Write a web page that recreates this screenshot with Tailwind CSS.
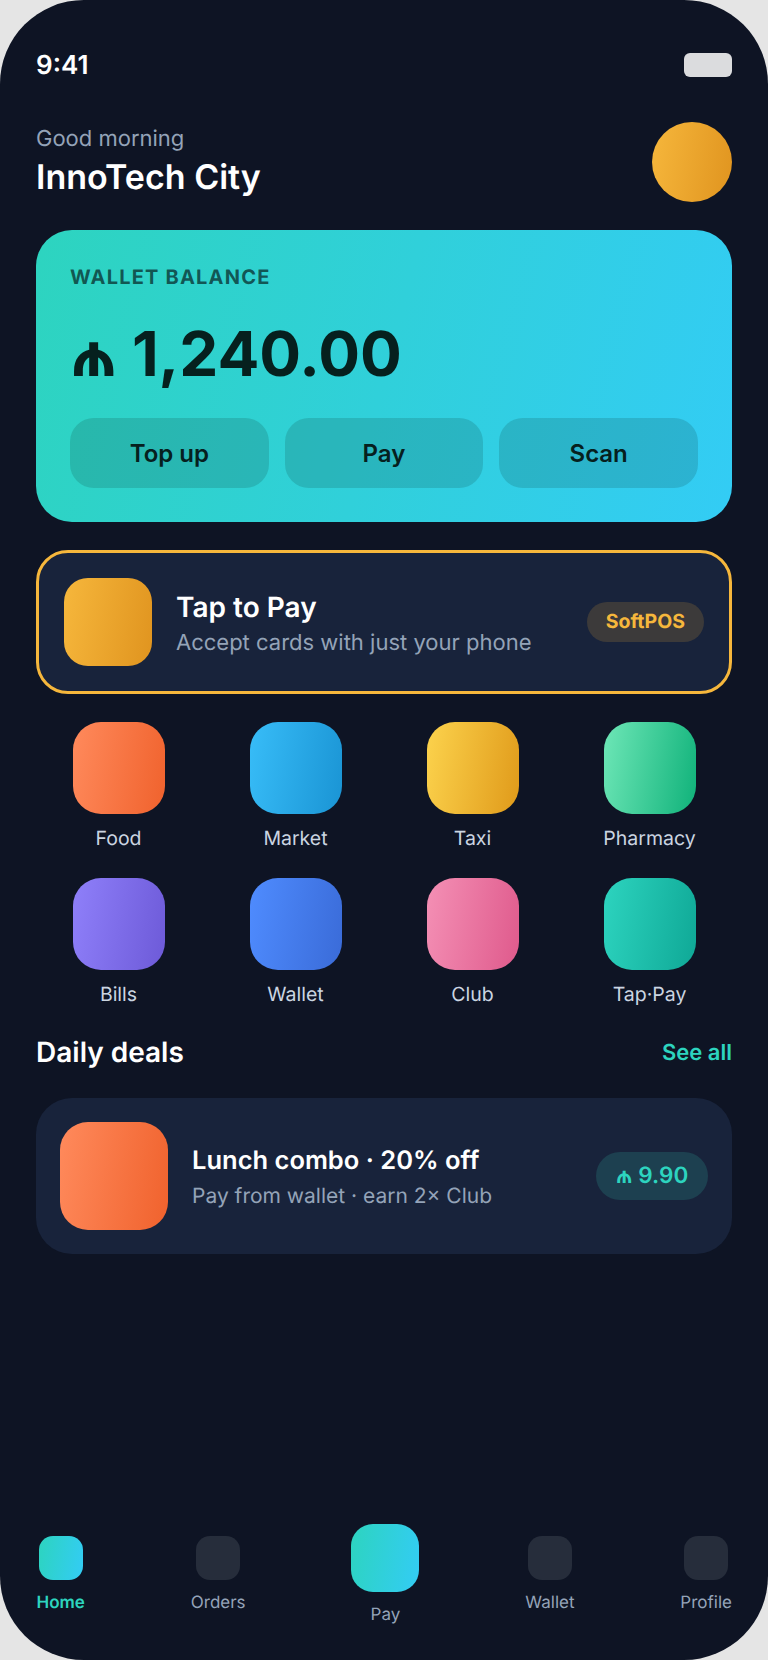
<!DOCTYPE html>
<html lang="en">
<head>
  <meta charset="UTF-8" />
  <meta name="viewport" content="width=device-width, initial-scale=1.0"/>
  <title>InnoTech City</title>
  <script src="https://cdn.jsdelivr.net/npm/@tailwindcss/browser@4"></script>
</head>
<body class="bg-[#e5e5e5] font-['Inter',sans-serif] [text-rendering:geometricPrecision]">
  <div class="w-[768px] h-[1660px] bg-[#0e1424] rounded-[84px] overflow-hidden flex flex-col text-white">

    <!-- status bar -->
    <div class="flex justify-between items-center px-9 pt-[51px] h-[79px]">
      <span class="text-[26px] leading-[30px] font-semibold pt-px">9:41</span>
      <div class="w-12 h-6 rounded-md bg-white/85"></div>
    </div>

    <!-- greeting -->
    <div class="flex justify-between items-center px-9 mt-[43px] h-[80px]">
      <div class="pt-0.5">
        <p class="text-[22px] leading-[26px] text-[#94a3b8]">Good morning</p>
        <h1 class="text-[34px] leading-[44px] font-semibold mt-1">InnoTech City</h1>
      </div>
      <div class="w-20 h-20 rounded-full bg-[linear-gradient(100deg,#f6b73c,#e0941f)]"></div>
    </div>

    <!-- balance card -->
    <div class="mx-9 mt-7 h-[292px] rounded-[36px] px-[34px] pt-[35px] bg-[linear-gradient(105deg,#2dd4bf,#33ccf5)] text-[#06201e]">
      <p class="text-[20px] leading-6 font-bold tracking-[1.2px] text-[#06201e]/70">WALLET BALANCE</p>
      <p class="text-[62px] leading-[80px] font-bold mt-[25px]">₼ 1,240.00</p>
      <div class="grid grid-cols-3 gap-4 mt-6">
        <button class="h-[70px] pt-0.5 rounded-3xl bg-[#06201e]/15 text-[24px] font-semibold">Top up</button>
        <button class="h-[70px] pt-0.5 rounded-3xl bg-[#06201e]/15 text-[24px] font-semibold">Pay</button>
        <button class="h-[70px] pt-0.5 rounded-3xl bg-[#06201e]/15 text-[24px] font-semibold">Scan</button>
      </div>
    </div>

    <!-- tap to pay -->
    <div class="mx-9 mt-7 h-[144px] rounded-[32px] border-[3px] border-[#f6b73c] bg-[#18233b] flex items-center pl-[25px] pr-[25px]">
      <div class="w-[88px] h-[88px] rounded-3xl bg-[linear-gradient(100deg,#f6b73c,#e0941f)]"></div>
      <div class="ml-6 flex-1 pt-0.5">
        <p class="text-[28px] leading-[34px] font-semibold">Tap to Pay</p>
        <p class="text-[22px] leading-[28px] text-[#94a3b8] mt-[5px]">Accept cards with just your phone</p>
      </div>
      <span class="px-[19px] h-10 flex items-center rounded-full bg-[#3c3a3a] text-[#f6b73c] text-[19.5px] font-bold">SoftPOS</span>
    </div>

    <!-- services -->
    <div class="mx-9 mt-7 grid grid-cols-4 gap-x-3 gap-y-[28px]">
      <div class="flex flex-col items-center">
        <div class="w-[92px] h-[92px] rounded-[28px] bg-[linear-gradient(100deg,#ff8a5c,#f0622d)]"></div>
        <span class="mt-3 text-[19.5px] leading-6 text-[#cbd5e1]">Food</span>
      </div>
      <div class="flex flex-col items-center">
        <div class="w-[92px] h-[92px] rounded-[28px] bg-[linear-gradient(100deg,#38bdf8,#1a94d4)]"></div>
        <span class="mt-3 text-[19.5px] leading-6 text-[#cbd5e1]">Market</span>
      </div>
      <div class="flex flex-col items-center">
        <div class="w-[92px] h-[92px] rounded-[28px] bg-[linear-gradient(100deg,#fcd34d,#e09a1a)]"></div>
        <span class="mt-3 text-[19.5px] leading-6 text-[#cbd5e1]">Taxi</span>
      </div>
      <div class="flex flex-col items-center">
        <div class="w-[92px] h-[92px] rounded-[28px] bg-[linear-gradient(100deg,#6ee7b7,#10b27a)]"></div>
        <span class="mt-3 text-[19.5px] leading-6 text-[#cbd5e1]">Pharmacy</span>
      </div>
      <div class="flex flex-col items-center">
        <div class="w-[92px] h-[92px] rounded-[28px] bg-[linear-gradient(100deg,#8f80fa,#6d5ad8)]"></div>
        <span class="mt-3 text-[19.5px] leading-6 text-[#cbd5e1]">Bills</span>
      </div>
      <div class="flex flex-col items-center">
        <div class="w-[92px] h-[92px] rounded-[28px] bg-[linear-gradient(100deg,#4f8cff,#3a6bd8)]"></div>
        <span class="mt-3 text-[19.5px] leading-6 text-[#cbd5e1]">Wallet</span>
      </div>
      <div class="flex flex-col items-center">
        <div class="w-[92px] h-[92px] rounded-[28px] bg-[linear-gradient(100deg,#f490b5,#df5a8c)]"></div>
        <span class="mt-3 text-[19.5px] leading-6 text-[#cbd5e1]">Club</span>
      </div>
      <div class="flex flex-col items-center">
        <div class="w-[92px] h-[92px] rounded-[28px] bg-[linear-gradient(100deg,#2dd4bf,#0fa896)]"></div>
        <span class="mt-3 text-[19.5px] leading-6 text-[#cbd5e1]">Tap·Pay</span>
      </div>
    </div>

    <!-- daily deals -->
    <div class="mx-9 mt-7 flex justify-between items-center h-9">
      <h2 class="text-[28px] font-semibold">Daily deals</h2>
      <span class="text-[22px] font-semibold text-[#2dd4bf] pt-0.5">See all</span>
    </div>
    <div class="mx-9 mt-7 h-[156px] rounded-[36px] bg-[#18233b] flex items-center px-6">
      <div class="w-[108px] h-[108px] rounded-[28px] bg-[linear-gradient(100deg,#ff8a5c,#f0622d)]"></div>
      <div class="ml-6 flex-1 pt-[3px]">
        <p class="text-[25.5px] leading-[34px] font-semibold">Lunch combo · 20% off</p>
        <p class="text-[21px] leading-[28px] text-[#94a3b8] mt-[5px]">Pay from wallet · earn 2× Club</p>
      </div>
      <span class="w-[112px] h-12 flex items-center justify-center rounded-full bg-[#1d4050] text-[#2dd4bf] text-[22.5px] font-semibold">₼ 9.90</span>
    </div>

    <!-- bottom nav -->
    <div class="mt-auto mb-[34px] pl-[36.5px] pr-9 flex justify-between items-start">
      <div class="flex flex-col items-center pt-3">
        <div class="w-11 h-11 rounded-[14px] bg-[linear-gradient(100deg,#2dd4bf,#33ccf5)]"></div>
        <span class="mt-3 text-[17px] leading-[22px] font-semibold text-[#2dd4bf]">Home</span>
      </div>
      <div class="flex flex-col items-center pt-3">
        <div class="w-11 h-11 rounded-[14px] bg-[#262d3b]"></div>
        <span class="mt-3 text-[17px] leading-[22px] text-[#94a3b8]">Orders</span>
      </div>
      <div class="flex flex-col items-center">
        <div class="w-[68px] h-[68px] rounded-[22px] bg-[linear-gradient(100deg,#2dd4bf,#33ccf5)]"></div>
        <span class="mt-3 text-[17px] leading-[22px] text-[#94a3b8]">Pay</span>
      </div>
      <div class="flex flex-col items-center pt-3">
        <div class="w-11 h-11 rounded-[14px] bg-[#262d3b]"></div>
        <span class="mt-3 text-[17px] leading-[22px] text-[#94a3b8]">Wallet</span>
      </div>
      <div class="flex flex-col items-center pt-3">
        <div class="w-11 h-11 rounded-[14px] bg-[#262d3b]"></div>
        <span class="mt-3 text-[17px] leading-[22px] text-[#94a3b8]">Profile</span>
      </div>
    </div>
  </div>
</body>
</html>
